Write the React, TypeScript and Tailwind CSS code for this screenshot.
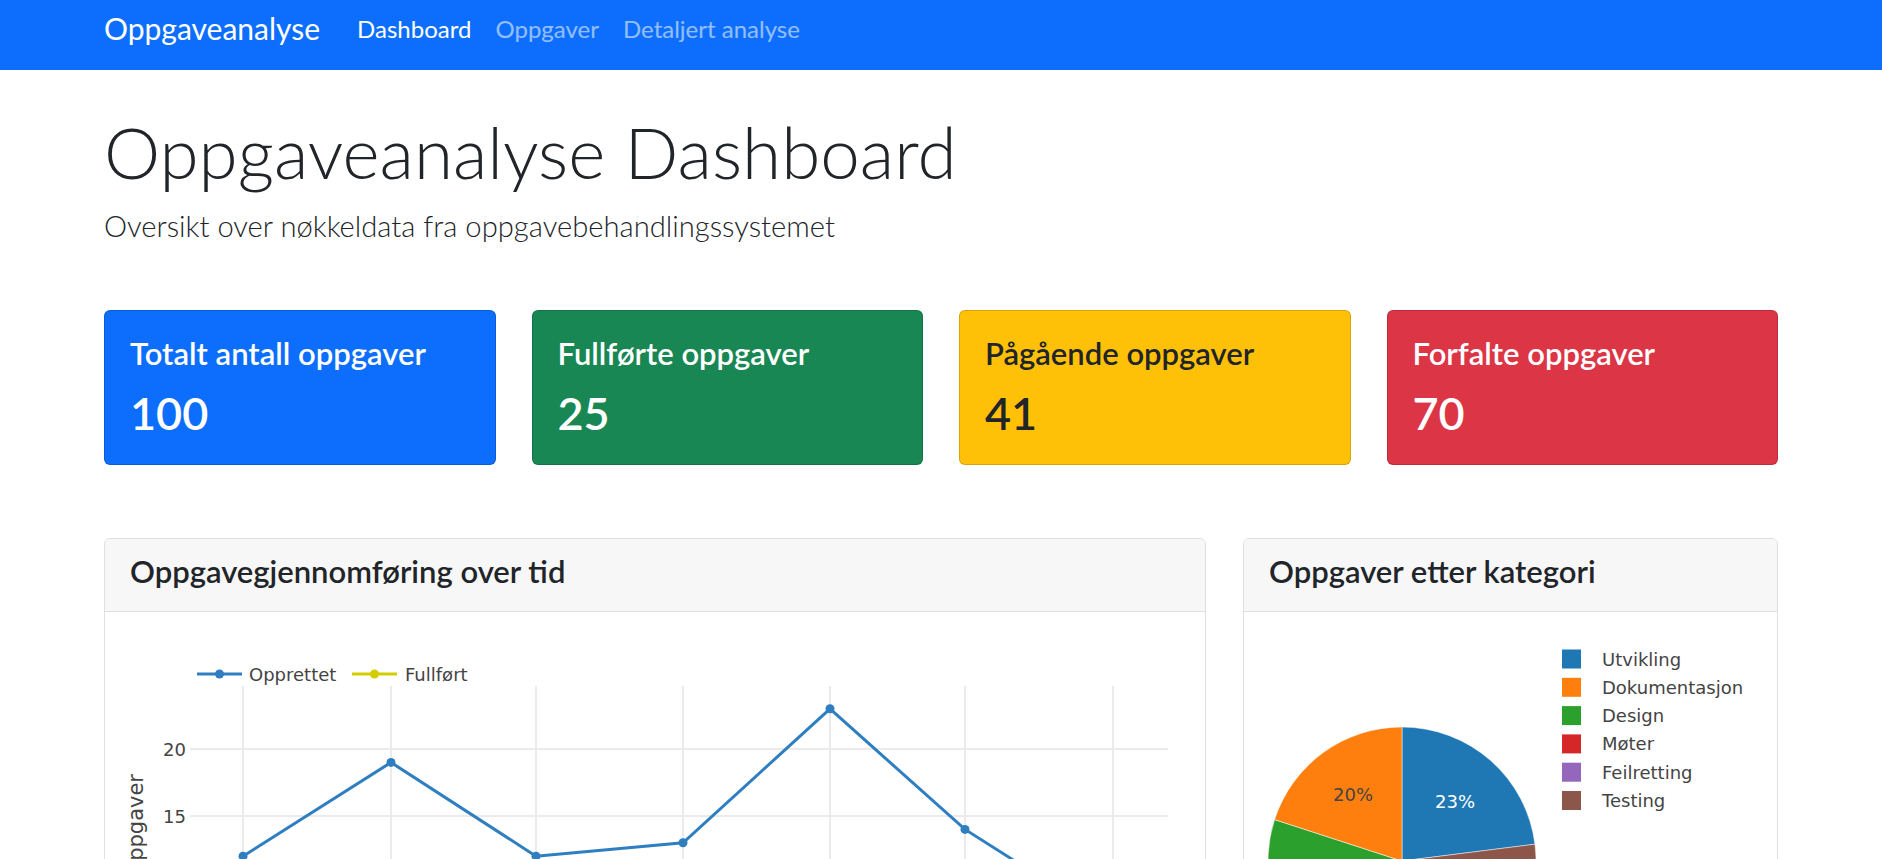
import React from "react";

const stats = [
  { title: "Totalt antall oppgaver", value: "100", cls: "bg-[#0d6efd] text-white" },
  { title: "Fullførte oppgaver", value: "25", cls: "bg-[#198754] text-white" },
  { title: "Pågående oppgaver", value: "41", cls: "bg-[#ffc107] text-[#212529]" },
  { title: "Forfalte oppgaver", value: "70", cls: "bg-[#dc3545] text-white" },
];

// x positions of the dates, y values of the series
const xs = [138, 286, 431, 578, 725, 860, 1008];
const created = [12, 19, 12, 13, 23, 14, 7];
const done = [2, 4, 3, 5, 4, 6, 3];
const yOf = (v: number) => 137 + (20 - v) * 13.4;

const categories = [
  { name: "Utvikling", value: 23, color: "#1f77b4" },
  { name: "Dokumentasjon", value: 20, color: "#ff7f0e" },
  { name: "Design", value: 17, color: "#2ca02c" },
  { name: "Møter", value: 15, color: "#d62728" },
  { name: "Feilretting", value: 13, color: "#9467bd" },
  { name: "Testing", value: 12, color: "#8c564b" },
];
// clockwise from 12 o'clock
const pieOrder = ["Utvikling", "Testing", "Feilretting", "Møter", "Design", "Dokumentasjon"];

function arc(cx: number, cy: number, r: number, a0: number, a1: number) {
  const p = (a: number) => {
    const t = (a * Math.PI) / 180;
    return [cx + r * Math.sin(t), cy - r * Math.cos(t)];
  };
  const [x0, y0] = p(a0);
  const [x1, y1] = p(a1);
  const large = a1 - a0 > 180 ? 1 : 0;
  return `M${cx},${cy} L${x0},${y0} A${r},${r} 0 ${large} 1 ${x1},${y1} Z`;
}

function LineChart() {
  const path = (vals: number[]) => vals.map((v, i) => `${i ? "L" : "M"}${xs[i]},${yOf(v)}`).join(" ");
  return (
    <svg width="1100" height="420" className="block font-['DejaVu_Sans',sans-serif]">
      {xs.map((x) => (
        <line key={x} x1={x} x2={x} y1={74} y2={420} stroke="#ebebeb" strokeWidth="2" />
      ))}
      {[20, 15, 10, 5].map((v) => (
        <g key={v}>
          <line x1={85} x2={1063} y1={yOf(v)} y2={yOf(v)} stroke="#ebebeb" strokeWidth="2" />
          <text x={81} y={yOf(v)} textAnchor="end" dominantBaseline="central" fontSize="18" fill="#444">{v}</text>
        </g>
      ))}
      <text x={38} y={162} transform="rotate(-90 38 162)" textAnchor="end" fontSize="21" fill="#444">Antall oppgaver</text>

      <path d={path(done)} fill="none" stroke="#d4cc00" strokeWidth="3" />
      {done.map((v, i) => <circle key={i} cx={xs[i]} cy={yOf(v)} r="4.5" fill="#d4cc00" />)}
      <path d={path(created)} fill="none" stroke="#2f7fc0" strokeWidth="3" />
      {created.map((v, i) => <circle key={i} cx={xs[i]} cy={yOf(v)} r="4.5" fill="#2f7fc0" />)}

      <line x1={92} x2={137} y1={62} y2={62} stroke="#2f7fc0" strokeWidth="3" />
      <circle cx={114.5} cy={62} r="4.5" fill="#2f7fc0" />
      <text x={144} y={62} dominantBaseline="central" fontSize="18" fill="#444">Opprettet</text>
      <line x1={247} x2={292} y1={62} y2={62} stroke="#d4cc00" strokeWidth="3" />
      <circle cx={269.5} cy={62} r="4.5" fill="#d4cc00" />
      <text x={300} y={62} dominantBaseline="central" fontSize="18" fill="#444">Fullført</text>
    </svg>
  );
}

function PieChart() {
  let a = 0;
  const slices = pieOrder.map((n) => {
    const c = categories.find((k) => k.name === n)!;
    const a0 = a;
    a += c.value * 3.6;
    return { ...c, a0, a1: a };
  });
  return (
    <svg width="532" height="420" className="block font-['DejaVu_Sans',sans-serif]">
      {slices.map((s) => (
        <path key={s.name} d={arc(158, 249, 134, s.a0, s.a1)} fill={s.color} stroke="#fff" strokeWidth="0.5" />
      ))}
      <text x={109} y={182} textAnchor="middle" dominantBaseline="central" fontSize="18" fill="#444">20%</text>
      <text x={211} y={189} textAnchor="middle" dominantBaseline="central" fontSize="18" fill="#fff">23%</text>
      {categories.map((c, i) => (
        <g key={c.name}>
          <rect x={318} y={47 + i * 28.3 - 9.5} width="19" height="19" fill={c.color} />
          <text x={358} y={47 + i * 28.3} dominantBaseline="central" fontSize="18" fill="#444">{c.name}</text>
        </g>
      ))}
    </svg>
  );
}

function ChartCard({ title, children }: { title: string; children: React.ReactNode }) {
  return (
    <div className="overflow-hidden rounded-[6px] border border-[#dfdfdf] bg-white">
      <div className="flex h-[73px] items-center border-b border-[#dfdfdf] bg-[#f7f7f7] px-[25px] pb-[7px]">
        <h5 className="text-[31px] font-semibold leading-[37px] text-[#212529]">{title}</h5>
      </div>
      {children}
    </div>
  );
}

export default function App() {
  return (
    <div className="min-h-screen bg-white font-['Lato',sans-serif] text-[#212529]">
      <nav className="h-[70px] bg-[#0d6efd]">
        <div className="mx-auto flex w-[1674px] items-center pt-[6px]">
          <a className="mr-[37px] text-[30px] leading-[45px] text-white">Oppgaveanalyse</a>
          <div className="flex gap-[24px] text-[24px] leading-[45px]">
            <a className="text-white">Dashboard</a>
            <a className="text-white/55">Oppgaver</a>
            <a className="text-white/55">Detaljert analyse</a>
          </div>
        </div>
      </nav>

      <main className="mx-auto w-[1674px]">
        <h1 className="pt-[39px] text-[71px] font-light leading-[85px]">Oppgaveanalyse Dashboard</h1>
        <p className="mt-[11px] text-[29.2px] font-light leading-[42px]">Oversikt over nøkkeldata fra oppgavebehandlingssystemet</p>

        <div className="mt-[63px] grid grid-cols-4 gap-[36px]">
          {stats.map((s) => (
            <div key={s.title} className={`h-[155px] rounded-[6px] border border-black/15 px-[25px] pt-[24px] ${s.cls}`}>
              <h4 className="text-[31px] font-semibold leading-[37px]">{s.title}</h4>
              <div className="mt-[14px] text-[45px] font-semibold leading-[54px]">{s.value}</div>
            </div>
          ))}
        </div>

        <div className="mt-[73px] grid grid-cols-[1102px_535px] gap-[37px]">
          <ChartCard title="Oppgavegjennomføring over tid">
            <LineChart />
          </ChartCard>
          <ChartCard title="Oppgaver etter kategori">
            <PieChart />
          </ChartCard>
        </div>
      </main>
    </div>
  );
}
